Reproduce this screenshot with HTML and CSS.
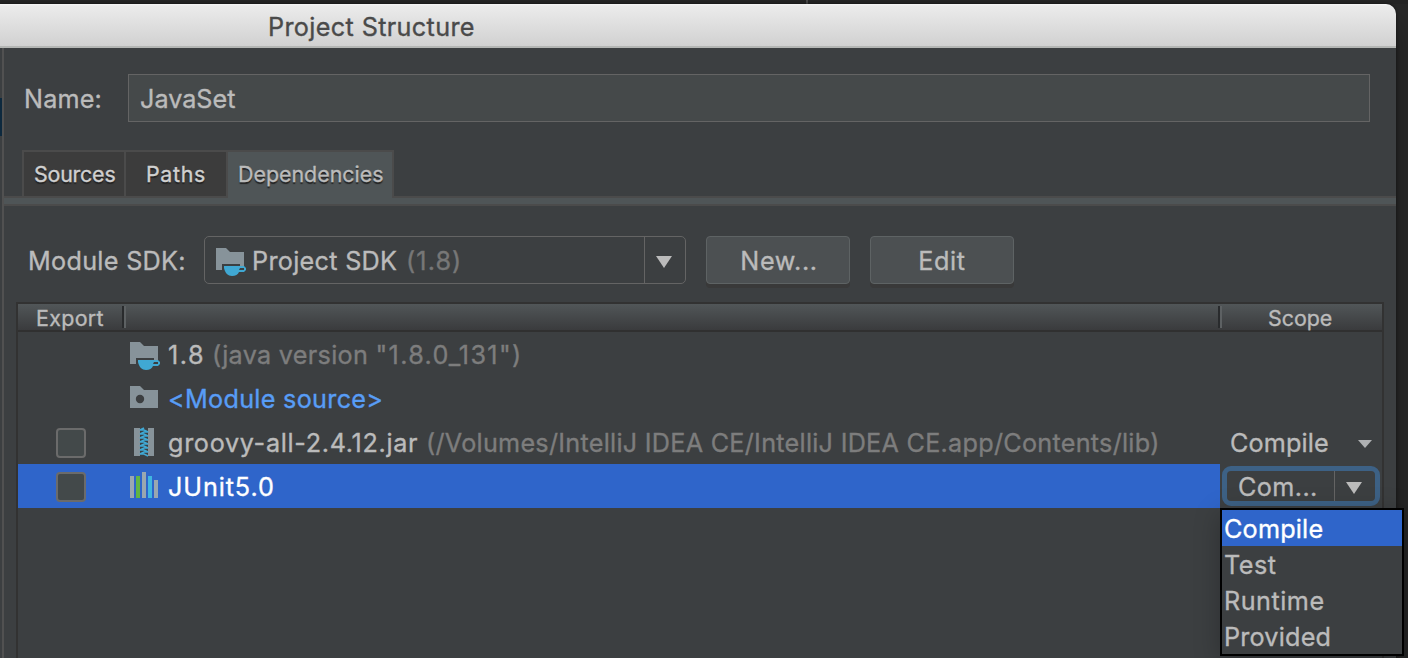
FILE: index.html
```html
<!DOCTYPE html>
<html lang="en">
<head>
<meta charset="utf-8">
<title>Project Structure</title>
<link rel="stylesheet" href="styles.css">
</head>
<body>
<svg width="0" height="0" class="defs">
  <symbol id="sdk" viewBox="0 0 32 32">
    <path fill="#87939a" d="M2 4h10l4 4h14v14h-4v-2H8v6H2z"/>
    <path fill="#40a8d3" fill-rule="evenodd" d="M10 22h20l2 2v2l-2 2h-5c-1 2.400-3.500 4-7 4-4 0-7-3-8-8zM26 24l-1 2h5v-2z"/>
  </symbol>
</svg>
<div class="backdrop"><span class="back-split"></span></div>
<div class="window">
  <header class="titlebar"><h1 class="title">Project Structure</h1></header>
  <div class="body">
    <div class="sidebar"><span class="side-selection"></span></div>
    <main class="editor">
      <div class="name-row">
        <label class="name-label">Name:</label>
        <div class="name-field"><span class="name-value">JavaSet</span></div>
      </div>
      <nav class="tabs">
        <span class="tab tab-sources">Sources</span>
        <span class="tab tab-paths">Paths</span>
        <span class="tab tab-deps">Dependencies</span>
      </nav>
      <div class="tab-strip"></div>
      <div class="sdk-row">
        <span class="sdk-label">Module SDK:</span>
        <div class="combo">
          <div class="combo-value">
            <svg class="icon"><use href="#sdk"/></svg>
            <span class="sdk-name">Project SDK</span><span class="sdk-version">(1.8)</span>
          </div>
          <div class="combo-arrow"><svg width="16" height="12"><path fill="#bbb" d="M0 0h16L8 12z"/></svg></div>
        </div>
        <button class="button"><span class="new-text">New...</span></button>
        <button class="button"><span class="edit-text">Edit</span></button>
      </div>
      <section class="table">
        <div class="table-head">
          <span class="head-export"><span class="export-text">Export</span></span>
          <span class="head-name"></span>
          <span class="head-scope"><span class="scope-text">Scope</span></span>
        </div>
        <div class="row">
          <span class="cell-check"></span>
          <span class="cell-name"><svg class="icon"><use href="#sdk"/></svg><span class="t-version">1.8</span><span class="t-java muted">(java version <b class="t-number">"1.8.0_131")</b></span></span>
        </div>
        <div class="row">
          <span class="cell-check"></span>
          <span class="cell-name"><svg class="icon" viewBox="0 0 32 32"><path fill="#87939a" d="M2 4h10l4 4h14v18H2z"/><circle cx="12" cy="17" r="4.200" fill="#3c3f41"/></svg><span class="t-module">&lt;Module source&gt;</span></span>
        </div>
        <div class="row">
          <span class="cell-check"><span class="checkbox"></span></span>
          <span class="cell-name"><svg class="icon" viewBox="0 0 32 32"><path fill="#87939a" d="M6 2h6v28H6zM20 2h6v28h-6z"/><path fill="none" stroke="#40a8d3" stroke-width="1.700" d="M16 2l-4 2h4l4 2h-4l-4 2h4l4 2h-4l-4 2h4l4 2h-4l-4 2h4l4 2h-4l-4 2h4l4 2h-4l-4 2h4l4 2h-4l-4 2h4l4 2"/></svg><span class="t-groovy">groovy-all-2.4.12.jar</span><span class="t-path muted">(/Volumes/IntelliJ IDEA CE/IntelliJ IDEA CE.app/Contents/lib)</span></span>
          <span class="cell-scope"><span class="compile-text">Compile</span><svg class="small-arrow" width="14" height="8"><path fill="#afb1b3" d="M0 0h14L7 8z"/></svg></span>
        </div>
        <div class="row selected">
          <span class="cell-check"><span class="checkbox"></span></span>
          <span class="cell-name"><svg class="icon" viewBox="0 0 32 32"><path fill="#9aa7b0" d="M2 6h4v22H2zM14 2h4v26h-4zM26 10h4v18h-4z"/><path fill="#62b543" d="M8 6h4v22H8z"/><path fill="#40b6e0" d="M20 6h4v22h-4z"/></svg><span class="t-junit">JUnit5.0</span></span>
          <span class="cell-edit">
            <span class="scope-combo">
              <span class="scope-value">Com...</span>
              <span class="scope-arrow"><svg width="16" height="12"><path fill="#bbb" d="M0 0h16L8 12z"/></svg></span>
            </span>
          </span>
        </div>
      </section>
    </main>
  </div>
</div>
<div class="popup">
  <div class="option option-active"><span class="o-compile">Compile</span></div>
  <div class="option"><span class="o-test">Test</span></div>
  <div class="option"><span class="o-runtime">Runtime</span></div>
  <div class="option"><span class="o-provided">Provided</span></div>
</div>
</body>
</html>
```

FILE: styles.css
```css
* { box-sizing: border-box; }
html, body { margin: 0; height: 658px; overflow: hidden; }
body {
  background: #282828;
  color: #bbb;
  font: 25.2px/30px Inter, "Liberation Sans", sans-serif;
  -webkit-text-stroke: .35px;
  white-space: nowrap;
}
.defs { display: block; }
.backdrop { height: 4px; background: #252525; padding-left: 806px; }
.back-split { display: block; width: 2px; height: 4px; background: #4a4a4a; }
.window {
  width: 1396px;
  height: 654px;
  border-radius: 0 10px 0 0;
  background: #3c3f41;
  overflow: hidden;
  box-shadow: 0 0 3px #111, 0 20px 30px rgba(0, 0, 0, .35);
}
.titlebar {
  height: 44px;
  padding: 8px 0 0 268px;
  background: linear-gradient(#f6f6f6 0, #ebebeb 2px, #d1d1d1 42px);
  border-bottom: 2px solid #b4b6b4;
}
.title { margin: 0; font: inherit; color: #4a4a4a; letter-spacing: .36px; }
.body { display: flex; height: 610px; }
.sidebar { width: 4px; padding-top: 50px; border-right: 2px solid #515151; flex: none; }
.side-selection { display: block; width: 2px; height: 38px; background: #0d293e; }
.editor { flex: 1; min-width: 0; }

.name-row { display: flex; align-items: center; padding: 26px 26px 0 20px; }
.name-label { width: 104px; padding-top: 2px; letter-spacing: .15px; }
.name-field {
  flex: 1;
  height: 48px;
  padding: 9px 11px;
  border: 1px solid #646464;
  background: #45494a;
}

.tabs { display: flex; width: 372px; height: 46px; margin: 28px 0 0 18px; border: solid #4b4b4b; border-width: 2px 2px 0; font-size: 21.4px; }
.tab { padding-top: 7px; background: #3c3c3c; color: #d0d0d0; text-shadow: 0 2px 1px #222; border-right: 2px solid #4b4b4b; }
.tab-sources { width: 102px; padding-left: 10px; letter-spacing: -.2px; }
.tab-paths { width: 102px; padding-left: 20px; letter-spacing: .7px; }
.tab-deps { flex: 1; height: 48px; padding-left: 10px; background: #4f5557; color: #bbb; border: 0; position: relative; }
.tab-strip { height: 10px; background: #4f5557; border: solid #4b4b4b; border-width: 2px 0; }

.sdk-row { display: flex; align-items: flex-start; padding: 30px 0 0 24px; }
.sdk-label { width: 176px; padding-top: 10px; letter-spacing: .3px; }
.combo { display: flex; width: 482px; height: 48px; border: 1px solid #646464; border-radius: 5px; margin-right: 20px; }
.combo-value { width: 440px; display: flex; align-items: center; padding-left: 9px; border-right: 1px solid #646464; }
.combo-arrow { padding: 19px 0 0 11px; line-height: 0; }
.icon { width: 32px; height: 32px; flex: none; }
.sdk-name { width: 154px; margin-left: 6px; padding-top: 2px; letter-spacing: .3px; }
.sdk-version { color: #777; padding-top: 2px; letter-spacing: 1.1px; }
.button {
  width: 144px;
  height: 48px;
  margin-right: 20px;
  padding: 2px 0 0;
  border: 1px solid #5e6364;
  border-radius: 4px;
  background: #4c5052;
  color: #bbb;
  font: inherit;
  letter-spacing: .6px;
  box-shadow: 0 4px 0 #393939;
}
.new-text { padding-left: 2px; }

.table { width: 1368px; height: 420px; margin: 18px 0 0 12px; border: 2px solid #323232; }
.table-head { display: flex; height: 28px; padding-top: 2px; border-bottom: 2px solid #303030; background: linear-gradient(#515658, #3a3b3d); font-size: 21.4px; line-height: 25px; }
.head-export, .head-name { height: 22px; border-right: 2px solid #5d6163; position: relative; box-shadow: inset -2px 0 #292b2d; }
.head-export { width: 108px; padding-left: 18px; letter-spacing: .35px; }
.head-name { width: 1096px; }
.head-scope { padding-left: 46px; }
.row { display: flex; height: 44px; }
.cell-check { width: 110px; padding: 8px 0 0 38px; }
.checkbox { display: block; width: 30px; height: 30px; border: 2px solid #6b6b6b; border-radius: 4px; background: #43494a; }
.cell-name { display: flex; align-items: center; width: 1092px; height: 44px; }
.cell-name .icon { margin-right: 8px; }
.cell-name span { padding-top: 2px; }
.muted { color: #7d7d7d; }
.t-version { width: 44px; letter-spacing: 1.5px; }
.t-java { letter-spacing: .3px; }
.t-number { font-weight: inherit; letter-spacing: 1.35px; }
.t-module { color: #589df6; letter-spacing: .3px; }
.t-groovy { width: 258px; letter-spacing: .68px; }
.t-path { letter-spacing: .27px; }
.t-junit { letter-spacing: .9px; }
.cell-scope { display: flex; align-items: center; padding-left: 10px; width: 160px; }
.compile-text { width: 128px; padding-top: 2px; letter-spacing: .15px; }
.small-arrow { margin-top: 3px; }
.selected .cell-check, .selected .cell-name { background: #2f65ca; color: #fff; }
.cell-edit { padding: 2px; background: #3c3f41; }
.scope-combo { display: flex; width: 158px; height: 40px; border: 5px solid #3d6185; border-radius: 9px; background: #3c3f41; }
.scope-value { width: 108px; padding: 1px 0 0 11px; border-right: 1px solid #646464; letter-spacing: .4px; }
.scope-arrow { padding: 11px 0 0 11px; line-height: 0; }

.popup { position: absolute; left: 1220px; top: 508px; width: 184px; height: 148px; border: 2px solid #000; background: #3c3f41; box-shadow: 0 6px 24px rgba(0, 0, 0, .25); }
.option { height: 36px; padding: 4px 0 0 2px; letter-spacing: .2px; }
.option-active { background: #2f65ca; color: #fff; }
.o-test, .o-runtime { letter-spacing: .5px; }
```
